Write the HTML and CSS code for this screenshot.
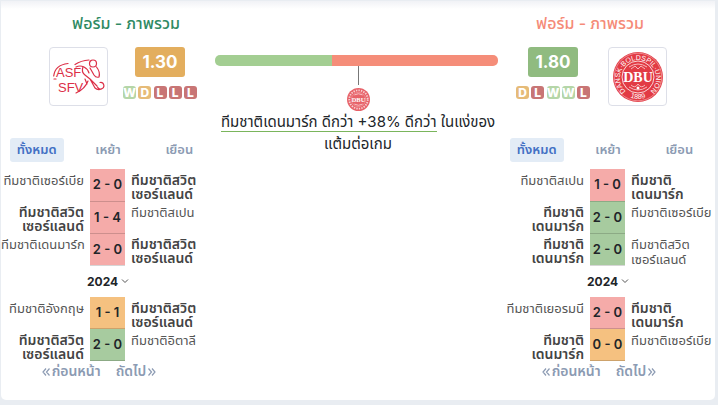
FILE: index.html
```html
<!DOCTYPE html>
<html lang="th">
<head>
    <meta charset="UTF-8">
    <meta name="viewport" content="width=device-width, initial-scale=1.0">
    <title>ฟอร์ม - ภาพรวม</title>
    <link rel="stylesheet" href="styles.css">
</head>
<body>

<svg class="defs" width="0" height="0" aria-hidden="true">
    <symbol id="chevron" viewBox="0 0 8 8">
        <path d="M1 2.5l3 3 3-3" fill="none" stroke="#555" stroke-width="1"/>
    </symbol>
    <symbol id="prev" viewBox="0 0 8 8">
        <path d="M4 .5L1 4l3 3.5M7.5.5L4.5 4l3 3.5" fill="none" stroke="currentColor" stroke-width="1.2"/>
    </symbol>
    <symbol id="next" viewBox="0 0 8 8">
        <path d="M.5.5l3 3.5-3 3.5M4 .5l3 3.5-3 3.5" fill="none" stroke="currentColor" stroke-width="1.2"/>
    </symbol>
</svg>

<main class="card">
    <section class="team team-home">
        <h2 class="title">ฟอร์ม - ภาพรวม</h2>
        <div class="summary">
            <div class="crest">
                <svg class="crest-swiss" viewBox="0 0 52 36" aria-label="ASF SFV">
                    <text x="3" y="18">ASF</text>
                    <text x="5" y="33">SFV</text>
                    <g fill="none" stroke="#dc2f47" stroke-width="1.2" stroke-linecap="round" stroke-linejoin="round">
                        <path d="M.7 17Q2 6 15 4.500M1 20h2"/>
                        <path d="M22 5.500q6-4 14-4.500M23 8q4-2 8 0q4 2 5 6"/>
                        <circle cx="40" cy="4.500" r="3.500"/>
                        <path d="M43.500 8q4 5 2.500 10q-3 1-5-2l-4-7"/>
                        <path d="M30 8q-2 5 2 8l5 4 7 7M37 20l5 9q2 2 5 1.500"/>
                        <path d="M44.500 28a3.300 3.300 0 1 0 2.500-4.500"/>
                        <path d="M35 22q-3 8-12 12M32 20l2 5"/>
                    </g>
                </svg>
            </div>
            <div class="rating">
                <strong class="score score-mid">1.30</strong>
                <div class="form">
                    <span class="badge win">W</span><span class="badge draw">D</span><span class="badge loss">L</span><span class="badge loss">L</span><span class="badge loss">L</span>
                </div>
            </div>
        </div>
        <div class="tabs">
            <button class="tab active">ทั้งหมด</button>
            <button class="tab">เหย้า</button>
            <button class="tab">เยือน</button>
        </div>
        <table class="matches">
            <tr><td class="home"><div class="name">ทีมชาติเซอร์เบีย</div></td><td class="result loss">2 - 0</td><td class="away own"><div class="name">ทีมชาติสวิต<br>เซอร์แลนด์</div></td></tr>
            <tr><td class="home own"><div class="name">ทีมชาติสวิต<br>เซอร์แลนด์</div></td><td class="result loss">1 - 4</td><td class="away"><div class="name">ทีมชาติสเปน</div></td></tr>
            <tr><td class="home"><div class="name">ทีมชาติเดนมาร์ก</div></td><td class="result loss">2 - 0</td><td class="away own"><div class="name">ทีมชาติสวิต<br>เซอร์แลนด์</div></td></tr>
        </table>
        <div class="year">
            <select aria-label="ปี"><option>2024</option></select>
            <svg class="icon"><use href="#chevron"/></svg>
        </div>
        <table class="matches">
            <tr><td class="home"><div class="name">ทีมชาติอังกฤษ</div></td><td class="result draw">1 - 1</td><td class="away own"><div class="name">ทีมชาติสวิต<br>เซอร์แลนด์</div></td></tr>
            <tr><td class="home own"><div class="name">ทีมชาติสวิต<br>เซอร์แลนด์</div></td><td class="result win">2 - 0</td><td class="away"><div class="name">ทีมชาติอิตาลี</div></td></tr>
        </table>
        <div class="pager">
            <button><svg class="icon"><use href="#prev"/></svg>ก่อนหน้า</button>
            <button>ถัดไป<svg class="icon"><use href="#next"/></svg></button>
        </div>
    </section>

    <section class="compare">
        <div class="bar"><span class="bar-home"></span><span class="bar-away"></span></div>
        <div class="pointer"></div>
        <svg class="mini-crest" viewBox="0 0 50 50" aria-label="DBU">
            <circle cx="25" cy="25" r="25" fill="#e23b44"/>
            <circle cx="25" cy="25" r="20" fill="none" stroke="#f6c3c6" stroke-width="4" stroke-dasharray="3 2.5"/>
            <circle cx="25" cy="25" r="15.5" fill="none" stroke="#f3a5a9" stroke-width="1"/>
            <path d="M16 15q9-5 18 0M16 35q9 5 18 0" fill="none" stroke="#f6b9bc" stroke-width="2"/>
            <text class="crest-name" x="25" y="30">DBU</text>
        </svg>
        <p class="verdict"><span class="underlined">ทีมชาติเดนมาร์ก ดีกว่า +38% ดีกว่า</span> ในแง่ของ<br>แต้มต่อเกม</p>
    </section>

    <section class="team team-away">
        <h2 class="title">ฟอร์ม - ภาพรวม</h2>
        <div class="summary">
            <div class="rating">
                <strong class="score score-good">1.80</strong>
                <div class="form">
                    <span class="badge draw">D</span><span class="badge loss">L</span><span class="badge win">W</span><span class="badge win">W</span><span class="badge loss">L</span>
                </div>
            </div>
            <div class="crest">
                <svg class="crest-dbu" viewBox="0 0 50 50" aria-label="DBU">
                    <circle cx="25" cy="25" r="25" fill="#e23b44"/>
                    <circle cx="25" cy="25" r="23.8" fill="none" stroke="#f3a5a9" stroke-width=".7"/>
                    <circle cx="25" cy="25" r="16" fill="none" stroke="#fff" stroke-width=".8"/>
                    <path id="ring" d="M14 40.2A18 18 0 1 1 36 40.2" fill="none"/>
                    <path id="ring-low" d="M10 41A22 22 0 0 0 40 41" fill="none"/>
                    <text class="crest-text"><textPath href="#ring" startOffset="50%">DANSK·BOLDSPIL·UNION</textPath></text>
                    <text class="crest-text"><textPath href="#ring-low" startOffset="50%">1889</textPath></text>
                    <path d="M16 15q9-6 18 0M18 17l4-3 3 3 3-3 4 3M16 35q9 6 18 0M18 33q4 4 7-1q3 5 7 1" fill="none" stroke="#f6b9bc" stroke-width="1"/>
                    <circle cx="25" cy="36" r="1.5" fill="#fff"/>
                    <text class="crest-name" x="25" y="30">DBU</text>
                </svg>
            </div>
        </div>
        <div class="tabs">
            <button class="tab active">ทั้งหมด</button>
            <button class="tab">เหย้า</button>
            <button class="tab">เยือน</button>
        </div>
        <table class="matches">
            <tr><td class="home"><div class="name">ทีมชาติสเปน</div></td><td class="result loss">1 - 0</td><td class="away own"><div class="name">ทีมชาติ<br>เดนมาร์ก</div></td></tr>
            <tr><td class="home own"><div class="name">ทีมชาติ<br>เดนมาร์ก</div></td><td class="result win">2 - 0</td><td class="away"><div class="name">ทีมชาติเซอร์เบีย</div></td></tr>
            <tr><td class="home own"><div class="name">ทีมชาติ<br>เดนมาร์ก</div></td><td class="result win">2 - 0</td><td class="away"><div class="name">ทีมชาติสวิต<br>เซอร์แลนด์</div></td></tr>
        </table>
        <div class="year">
            <select aria-label="ปี"><option>2024</option></select>
            <svg class="icon"><use href="#chevron"/></svg>
        </div>
        <table class="matches">
            <tr><td class="home"><div class="name">ทีมชาติเยอรมนี</div></td><td class="result loss">2 - 0</td><td class="away own"><div class="name">ทีมชาติ<br>เดนมาร์ก</div></td></tr>
            <tr><td class="home own"><div class="name">ทีมชาติ<br>เดนมาร์ก</div></td><td class="result draw">0 - 0</td><td class="away"><div class="name">ทีมชาติเซอร์เบีย</div></td></tr>
        </table>
        <div class="pager">
            <button><svg class="icon"><use href="#prev"/></svg>ก่อนหน้า</button>
            <button>ถัดไป<svg class="icon"><use href="#next"/></svg></button>
        </div>
    </section>
</main>

</body>
</html>
```

FILE: styles.css
```css
* {
    box-sizing: border-box;
}
body {
    margin: 0;
    padding: 1px 3px 4px 1px;
    background: #e9edf2;
    color: #212529;
    font-family: Inter, "Noto Sans Thai", "Liberation Sans", sans-serif;
    font-size: 13px;
}
button, select {
    padding: 0;
    border: 0;
    background: none;
    font-family: inherit;
    cursor: pointer;
}
.defs {
    position: absolute;
}
.card {
    display: grid;
    grid-template-columns: 214px 1fr 214px;
    padding-bottom: 18px;
    border-radius: 0 0 5px 5px;
    background: linear-gradient(#f1f2f6, #fff 8px);
}
.title {
    margin: 0;
    padding-top: 12px;
    font-size: 16px;
    font-weight: 500;
    line-height: 20px;
    text-align: center;
}
.team-home .title {
    padding-left: 36px;
    color: #2f8a63;
}
.team-away .title {
    padding-right: 36px;
    color: #f58b78;
}

/* crest, rating and last five */
.summary {
    display: flex;
    gap: 15px;
    margin-top: 14px;
    padding-left: 48px;
}
.team-away .summary {
    gap: 18px;
    padding-left: 15px;
}
.crest {
    display: flex;
    align-items: center;
    justify-content: center;
    width: 59px;
    height: 59px;
    border: 1px solid #dddfe8;
    border-radius: 4px;
}
.crest-swiss {
    width: 52px;
    height: 36px;
}
.crest-swiss text {
    fill: #dc2f47;
    font-family: "Liberation Sans", sans-serif;
    font-size: 13px;
}
.crest-dbu {
    width: 50px;
    height: 50px;
}
.crest-text {
    fill: #fff;
    font-family: "Liberation Sans", sans-serif;
    font-size: 7px;
    text-anchor: middle;
}
.crest-name {
    fill: #fff;
    font-family: "Liberation Serif", serif;
    font-size: 14px;
    font-weight: 700;
    text-anchor: middle;
}
.rating {
    display: flex;
    flex-direction: column;
    align-items: center;
    gap: 9px;
    width: 74px;
}
.score {
    width: 50px;
    border-radius: 3px;
    color: #fff;
    font-size: 17px;
    line-height: 30px;
    text-align: center;
}
.score-mid {
    background: #e3ae5e;
}
.score-good {
    background: #90bb80;
}
.form {
    display: flex;
    justify-content: space-between;
    width: 100%;
}
.badge {
    width: 13px;
    border-radius: 3px;
    color: #fff;
    font-size: 12px;
    font-weight: 800;
    line-height: 13px;
    text-align: center;
}
.badge.win {
    background: #b5d6a8;
}
.badge.draw {
    background: #e6bb78;
}
.badge.loss {
    background: #c87575;
}

/* tabs */
.tabs {
    display: grid;
    grid-template-columns: 1fr 1fr 1fr;
    justify-items: center;
    margin-top: 32px;
}
.tab {
    height: 24px;
    padding: 0 7px;
    border-radius: 3px;
    color: #8c9bb3;
    font-size: 13px;
    font-weight: 600;
}
.tab.active {
    background: #e3ecf6;
    color: #4270c4;
}

/* match list */
.matches {
    width: 100%;
    border-collapse: collapse;
    table-layout: fixed;
}
.tabs + .matches {
    margin-top: 7px;
}
.matches td {
    height: 32px;
    padding: 0;
    vertical-align: top;
    color: #555;
    font-size: 13px;
    line-height: 15px;
    white-space: nowrap;
}
.name {
    height: 31px;
    padding-top: 4px;
}
.year + .matches tr:first-child .name {
    overflow: hidden;
}
.matches .home {
    width: 89px;
    text-align: right;
}
.home .name {
    padding-right: 6px;
}
.away .name {
    padding-left: 6px;
}
.matches .own {
    color: #444;
    font-size: 14px;
    font-weight: 600;
    line-height: 14px;
}
.matches .result {
    width: 35px;
    border-bottom: 1px solid rgba(0, 0, 0, 0.16);
    color: #212529;
    font-weight: 600;
    text-align: center;
    vertical-align: middle;
}
.result.loss {
    background: #f5aba9;
}
.result.draw {
    background: #f5c180;
}
.result.win {
    background: #a7cb9f;
}
.year {
    display: flex;
    align-items: center;
    justify-content: center;
    gap: 2px;
    height: 31px;
}
.year select {
    appearance: none;
    color: #212529;
    font-size: 12px;
    font-weight: 700;
}
.icon {
    width: 8px;
    height: 8px;
}
.pager {
    display: flex;
    justify-content: center;
    gap: 15px;
    padding-right: 18px;
}
.pager button {
    display: flex;
    align-items: center;
    gap: 2px;
    height: 21px;
    color: #8c9bb3;
    font-size: 14px;
    font-weight: 600;
}

/* comparison */
.compare {
    padding-top: 54px;
}
.bar {
    display: flex;
    height: 11px;
    margin-right: 3px;
    overflow: hidden;
    border-radius: 5px;
}
.bar-home {
    flex: 117;
    background: #a3ce92;
}
.bar-away {
    flex: 166;
    background: #f58d79;
}
.pointer {
    width: 1px;
    height: 23px;
    margin: -4px auto 0;
    background: #777;
}
.mini-crest {
    display: block;
    width: 23px;
    height: 23px;
    margin: 3px auto 0;
    opacity: 0.8;
}
.verdict {
    margin: 0;
    font-size: 15px;
    line-height: 22px;
    text-align: center;
    white-space: nowrap;
}
.underlined {
    border-bottom: 1px solid #7ab55c;
}
```
